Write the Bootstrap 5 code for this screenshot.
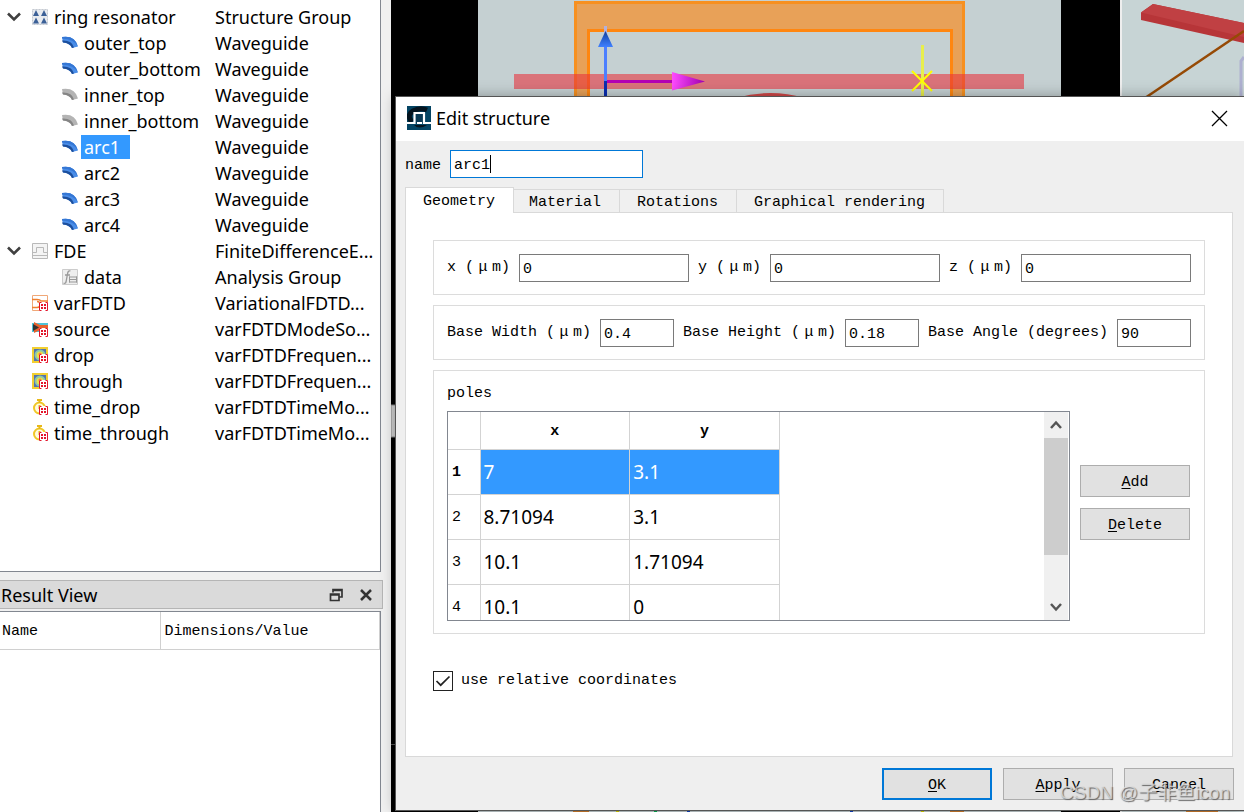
<!DOCTYPE html>
<html lang="en">
<head>
<meta charset="utf-8">
<meta name="viewport" content="width=device-width, initial-scale=1">
<title>Edit structure</title>
<link href="https://cdn.jsdelivr.net/npm/bootstrap@5.3.0/dist/css/bootstrap.min.css" rel="stylesheet">
<style>
  :root { --ui: "Noto Sans", "Noto Sans CJK SC", sans-serif; --mono: "Liberation Mono", "Noto Sans CJK SC", monospace; --line: #dcdcdc; --frame: #828790; --sel: #3399ff; }
  body { font-family: var(--ui); font-size: 18px; line-height: 26px; color: #000; background: #f0f0f0; }
  .mono { font-family: var(--mono); font-size: 15px; line-height: 18px; }
  svg { display: block; flex: none; }

  /* Object tree and result dock */
  .dock { width: 391px; flex: none; }
  .tree-pane { margin-right: 10px; padding-top: 4px; border: solid var(--frame); border-width: 0 1px 1px 0; }
  .tree-grid { width: 100%; table-layout: fixed; }
  .tree-grid td { height: 26px; padding: 0; white-space: nowrap; }
  .tree-grid td:first-child { width: 215px; }
  .node { height: 26px; padding-left: 32px; gap: 3px; }
  .node.child { padding-left: 62px; }
  .node.open { padding-left: 7px; }
  .node.open svg + svg { margin-left: 8px; }
  .node span { height: 24px; line-height: 24px; padding: 0 3px; }
  .picked span { background: var(--sel); color: #fff; padding-right: 10px; }
  .result-pane { flex: 0 0 232px; }
  .result-title { height: 29px; margin-right: 8px; padding: 0 9px 0 1px; background: #dadada; border: solid #b5b5b5; border-width: 1px 1px 1px 0; }
  .tool { border: 0; background: none; padding: 0; }
  .result-body { margin: 2px 10px 0 0; border: solid var(--frame); border-width: 1px 1px 0 0; }
  .result-body th { height: 37px; padding: 3px 0 0 4px; font-weight: 400; border: solid #d0d0d0; border-width: 0 1px 1px 0; }
  .result-body th:first-child { width: 160px; padding-left: 2px; }

  /* Viewports and dialog */
  .stage { background: #000; min-width: 0; }
  .stage > svg { position: absolute; inset: 0; width: 100%; height: 100%; }
  .sheet { position: absolute; inset: 97px 0 2px 5px; background: #efefef; box-shadow: 0 0 0 1px #555, 0 0 14px rgba(0,0,0,.35); }
  .sheet-title { height: 44px; padding: 0 16px 2px 11px; gap: 5px; }
  .field { height: 28px; min-width: 0; padding: 2px 3px 0; border: 1px solid #7a7a7a; border-radius: 0; background: #fff; color: #000; outline: 0; }
  .field:focus { border-color: #0078d7; }
  .name-row { padding: 9px 9px 0; gap: 9px; }
  .name-row label { padding-top: 3px; }
  .name-row .field { display: block; width: 193px; caret-color: transparent; }
  .caret { position: absolute; left: calc(4px + 4ch); top: 5px; width: 1px; height: 18px; background: #000; }
  .tab-strip { margin: 9px 11px 0 9px; height: 26px; }
  .tab-strip button { height: 24px; padding: 4px 18px 0 15px; border: 1px solid #d9d9d9; border-left: 0; background: #f0f0f0; color: #000; }
  .tab-strip .wide { padding: 4px 18px 0 17px; }
  .tab-strip .current { height: 26px; padding: 3px 18px 0 17px; border-left: 1px solid #d9d9d9; border-bottom: 0; background: #fff; z-index: 1; }
  .tab-panel { margin: -1px 11px 0 9px; padding: 27px 27px 0; border: 1px solid #d9d9d9; background: #fff; }
  .group { border: 1px solid var(--line); padding: 13px 13px 12px; margin-bottom: 10px; }
  .group.fields { gap: 9px; }
  .group.poles { padding-right: 14px; gap: 10px; }
  .caption { padding-top: 1px; margin-bottom: 8px; }
  .group label { white-space: nowrap; }
  .mu { display: inline-block; width: 18px; text-align: center; }
  .grid-frame { height: 210px; border: 1px solid var(--frame); overflow: hidden; }
  .poles-grid { width: 332px; table-layout: fixed; }
  .poles-grid th, .poles-grid td { height: 45px; padding: 0 3px; border: solid #d3d3d3; border-width: 0 1px 1px 0; }
  .poles-grid td { font-family: var(--ui); font-size: 19px; line-height: 26px; }
  .poles-grid th { padding: 3px 4px 0; }
  .poles-grid thead th { height: 37px; text-align: center; }
  .poles-grid th:first-child { width: 32px; }
  .poles-grid .hit td { background: var(--sel); color: #fff; }
  .scroller { width: 24px; margin-right: 1px; background: #f0f0f0; }
  .scroller button { height: 26px; }
  .thumb { height: 117px; background: #cdcdcd; }
  .side { gap: 11px; }
  .push { width: 110px; height: 32px; border: 1px solid #adadad; background: #e1e1e1; color: #000; padding: 3px 0 0; }
  .push.default { border: 2px solid #0078d7; }
  .push u { text-underline-offset: 2px; }
  .rel { margin-top: 37px; }
  .tick { appearance: none; width: 20px; height: 20px; margin: 0; border: 1px solid #222; background: #fff url("data:image/svg+xml,%3Csvg xmlns='http://www.w3.org/2000/svg' viewBox='0 0 18 18'%3E%3Cpath d='M2.500 9l4.200 4.200L15.500 4.500' fill='none' stroke='%23222' stroke-width='1.700'/%3E%3C/svg%3E"); }
  .actions { padding: 11px 10px 10px; gap: 11px; }
  .stamp { position: absolute; right: 14px; bottom: 5px; font-family: "Liberation Sans", "Noto Sans CJK SC", sans-serif; font-size: 19px; line-height: 28px; color: rgba(225,225,225,.75); text-shadow: 1px 1px 1px #666; pointer-events: none; white-space: nowrap; }
</style>
</head>
<body>
<svg width="0" height="0" class="position-absolute" aria-hidden="true">
  <defs>
    <symbol id="chev" viewBox="0 0 14 10"><path d="M1 1.500l6 6 6-6" fill="none" stroke="#404040" stroke-width="2.600"/></symbol>
    <symbol id="group" viewBox="0 0 16 16"><path d="M0 0h16v16H0z" fill="#e8ebef"/><path d="M.5.500h15v15H.5z" fill="none" stroke="#c5c9d0" stroke-dasharray="2 1"/><path d="M4 1l3 6H1zM12 1l3 6H9zM4 8.500l3 6H1zM12 8.500l3 6H9z" fill="#3c6097"/></symbol>
    <symbol id="guide" viewBox="0 0 16 16"><path d="M0 2Q13 0 16 11.500l-6 1.500Q8 8 1 7.500z" fill="#4a8de8"/><path d="M0 5.500Q10 5 12 12.500l-2 .5Q8 8 1 7.500z" fill="#1d4f9c"/><path d="M0 2Q13 0 16 11.500Q12 4 0 3.500z" fill="#3577d4"/></symbol>
    <symbol id="guide-off" viewBox="0 0 16 16"><path d="M0 2Q13 0 16 11.500l-6 1.500Q8 8 1 7.500z" fill="#b4b4b4"/><path d="M0 5.500Q10 5 12 12.500l-2 .5Q8 8 1 7.500z" fill="#858585"/></symbol>
    <symbol id="fde" viewBox="0 0 16 16"><path d="M.5.500h15v15H.5zM0 9.500h4.500v-5h7v5H16M0 12.500h16" fill="#f4f4f4" stroke="#b9b9b9"/></symbol>
    <symbol id="data" viewBox="0 0 16 16"><path d="M.5.500h15v15H.5z" fill="#eee" stroke="#ccc"/><path d="M8.500 2Q6 1 5.500 5L4 13Q3.500 15 1.500 14M3 6h5" fill="none" stroke="#999" stroke-width="1.300"/><path d="M7 8h8M7 10.500h8M7 13h8M7.500 7.500v6M14.500 7.500v6" stroke="#999"/></symbol>
    <symbol id="badge-red" viewBox="0 0 16 16"><path d="M7 7h9v9H7z" fill="#fff"/><path d="M9.500 7.500h-2v8h2M13.500 7.500h2v8h-2" fill="none" stroke="#e3142a"/><path d="M9 9h2v2H9zM12 9h2v2h-2zM9 12h2v2H9zM12 12h2v2h-2z" fill="#e3142a"/></symbol>
    <symbol id="var" viewBox="0 0 16 16"><path d="M.5.500h15v15H.5z" fill="#fff" stroke="#f0a878"/><path d="M0 4.500h5q3 0 4 1.500h7M0 12.500h5q3 0 3-3t-3-3" fill="none" stroke="#f08030" stroke-width="1.500"/><use href="#badge-red"/></symbol>
    <symbol id="src" viewBox="0 0 16 16"><path d="M0 2h16v9H0z" fill="#4fc3d8"/><path d="M2 1l6 3h8v5H8l-6 3z" fill="#e8622c"/><path d="M1 3l6 3.500L1 10z" fill="#333"/><use href="#badge-red"/></symbol>
    <symbol id="freq" viewBox="0 0 16 16"><path d="M1 1h14v14H1z" fill="#5373ad" stroke="#f2cf30" stroke-width="2"/><circle cx="8" cy="8" r="5.500" fill="#8cc7a8"/><circle cx="8" cy="8" r="3.500" fill="#e8e04c"/><circle cx="8" cy="7" r="1.500" fill="#ef8a3c"/><use href="#badge-red"/></symbol>
    <symbol id="time" viewBox="0 0 16 16"><circle cx="7.500" cy="9" r="5.500" fill="#fffbe0" stroke="#f0c828" stroke-width="2"/><path d="M5 1h5M7.500 1v3M7.500 6v4" stroke="#e8b818" stroke-width="2"/><use href="#badge-red"/></symbol>
  </defs>
</svg>

<div class="d-flex min-vh-100">
  <aside class="dock d-flex flex-column">
    <div class="tree-pane bg-white flex-grow-1">
      <table class="tree-grid">
        <tbody>
          <tr><td><div class="node open d-flex align-items-center"><svg width="14" height="10"><use href="#chev"/></svg><svg width="16" height="16"><use href="#group"/></svg><span>ring resonator</span></div></td><td>Structure Group</td></tr>
          <tr><td><div class="node child d-flex align-items-center"><svg width="16" height="16"><use href="#guide"/></svg><span>outer_top</span></div></td><td>Waveguide</td></tr>
          <tr><td><div class="node child d-flex align-items-center"><svg width="16" height="16"><use href="#guide"/></svg><span>outer_bottom</span></div></td><td>Waveguide</td></tr>
          <tr><td><div class="node child d-flex align-items-center"><svg width="16" height="16"><use href="#guide-off"/></svg><span>inner_top</span></div></td><td>Waveguide</td></tr>
          <tr><td><div class="node child d-flex align-items-center"><svg width="16" height="16"><use href="#guide-off"/></svg><span>inner_bottom</span></div></td><td>Waveguide</td></tr>
          <tr><td><div class="node child picked d-flex align-items-center"><svg width="16" height="16"><use href="#guide"/></svg><span>arc1</span></div></td><td>Waveguide</td></tr>
          <tr><td><div class="node child d-flex align-items-center"><svg width="16" height="16"><use href="#guide"/></svg><span>arc2</span></div></td><td>Waveguide</td></tr>
          <tr><td><div class="node child d-flex align-items-center"><svg width="16" height="16"><use href="#guide"/></svg><span>arc3</span></div></td><td>Waveguide</td></tr>
          <tr><td><div class="node child d-flex align-items-center"><svg width="16" height="16"><use href="#guide"/></svg><span>arc4</span></div></td><td>Waveguide</td></tr>
          <tr><td><div class="node open d-flex align-items-center"><svg width="14" height="10"><use href="#chev"/></svg><svg width="16" height="16"><use href="#fde"/></svg><span>FDE</span></div></td><td>FiniteDifferenceE...</td></tr>
          <tr><td><div class="node child d-flex align-items-center"><svg width="16" height="16"><use href="#data"/></svg><span>data</span></div></td><td>Analysis Group</td></tr>
          <tr><td><div class="node d-flex align-items-center"><svg width="16" height="16"><use href="#var"/></svg><span>varFDTD</span></div></td><td>VariationalFDTD...</td></tr>
          <tr><td><div class="node d-flex align-items-center"><svg width="16" height="16"><use href="#src"/></svg><span>source</span></div></td><td>varFDTDModeSo...</td></tr>
          <tr><td><div class="node d-flex align-items-center"><svg width="16" height="16"><use href="#freq"/></svg><span>drop</span></div></td><td>varFDTDFrequen...</td></tr>
          <tr><td><div class="node d-flex align-items-center"><svg width="16" height="16"><use href="#freq"/></svg><span>through</span></div></td><td>varFDTDFrequen...</td></tr>
          <tr><td><div class="node d-flex align-items-center"><svg width="16" height="16"><use href="#time"/></svg><span>time_drop</span></div></td><td>varFDTDTimeMo...</td></tr>
          <tr><td><div class="node d-flex align-items-center"><svg width="16" height="16"><use href="#time"/></svg><span>time_through</span></div></td><td>varFDTDTimeMo...</td></tr>
        </tbody>
      </table>
    </div>
    <section class="result-pane d-flex flex-column mt-2">
      <div class="result-title d-flex align-items-center">
        <span class="flex-grow-1">Result View</span>
        <button class="tool me-3" aria-label="Float"><svg width="14" height="14" viewBox="0 0 14 14"><path d="M4 4.500V1.500h9V9h-2.500M4 2.500h9M1.500 6h8.500v6.500H1.500zM1 7h9" fill="none" stroke="#333" stroke-width="1.700"/></svg></button>
        <button class="tool" aria-label="Close"><svg width="14" height="14" viewBox="0 0 14 14"><path d="M2 2l10 10M12 2L2 12" stroke="#333" stroke-width="2.500"/></svg></button>
      </div>
      <div class="result-body bg-white flex-grow-1">
        <table class="w-100 mono"><thead><tr><th>Name</th><th>Dimensions/Value</th></tr></thead></table>
      </div>
    </section>
  </aside>

  <main class="stage position-relative flex-grow-1">
    <svg viewBox="0 0 853 812" preserveAspectRatio="xMinYMin slice" aria-hidden="true">
      <defs>
        <linearGradient id="mg"><stop stop-color="#ff4cff"/><stop offset="1" stop-color="#a000b0"/></linearGradient>
        <linearGradient id="bl" x2="0" y2="1"><stop stop-color="#1040a0"/><stop offset="1" stop-color="#4080ff"/></linearGradient>
      </defs>
      <path d="M87 0h583v812H87z" fill="#c5d0d2"/>
      <path d="M184 100V3h388v97h-12V30H197v70z" fill="#e8a158"/>
      <path d="M184.500 100V2.500h388V100" fill="none" stroke="#f79020" stroke-width="3"/>
      <path d="M197.500 100V30.500h363V100" fill="none" stroke="#ff8610" stroke-width="3"/>
      <path d="M123 74h510v15H123z" fill="#e8303a" fill-opacity=".58"/>
      <path d="M345 98q35-10 68 0z" fill="#d04848"/>
      <path d="M214.500 26v8" stroke="#b5b0d8" stroke-width="3"/>
      <path d="M214.500 44v37" stroke="#4c7fff" stroke-width="3"/><path d="M214.500 81v20" stroke="#0a2eb0" stroke-width="3"/>
      <path d="M214.500 31l7.500 16h-15z" fill="url(#bl)"/>
      <path d="M216 81.500h66" stroke="#b400b4" stroke-width="3"/><path d="M281 72l33 9.500-33 9z" fill="url(#mg)"/>
      <path d="M531.500 45v55" stroke="#e8ee4c" stroke-width="3"/><path d="M521 71l20 20M541 71l-20 20" stroke="#ff0" stroke-width="2"/>
      <path d="M729 0h2v812h-2z" fill="#eee"/><path d="M731 0h122v812H731z" fill="#c7d4d5"/>
      <path d="M750 12.500L762 4l91 19v20L750 20z" fill="#b73538"/><path d="M750 12.500L762 4l91 19v14z" fill="#c04043"/>
      <path d="M754 98l99-67" stroke="#964a05" stroke-width="2.500"/>
      <path d="M853 57l-3 4v40" fill="none" stroke="#aeb0d0" stroke-width="3"/>
      <path d="M0 405h5v32H0z" fill="#d0d0d0" stroke="#888"/><path d="M0 744.500h5" stroke="#555"/>
      <path d="M182 809h16v3h-16zM559 809h14v3h-14zM795 809h32v3h-32z" fill="#cf7c2c"/>
      <path d="M225 809h3v3h-3zM530 809h3v3h-3z" fill="#d8d000"/><path d="M263 809h3v3h-3z" fill="#00b050"/><path d="M296 809h3v3h-3zM459 809h3v3h-3z" fill="#1040c0"/>
      <path d="M670 809h59v3h-59z" fill="#000"/>
    </svg>

    <div class="sheet d-flex flex-column" role="dialog" aria-labelledby="dlg-title">
      <header class="sheet-title bg-white d-flex align-items-center">
        <svg width="24" height="24" viewBox="0 0 24 24"><path d="M0 0h24v24H0z" fill="#044463"/><path d="M5 16Q-1 9 6 5T20 4" fill="none" stroke="#04141f" stroke-width="5"/><path d="M7 19q5 5 13 0z" fill="#04141f"/><path d="M7 7h11v10H7z" fill="#0a3a55"/><path d="M0 17h7.500V7H17v10h7M10 17h5" fill="none" stroke="#fff" stroke-width="2.200"/></svg>
        <span id="dlg-title" class="flex-grow-1">Edit structure</span>
        <button class="tool" aria-label="Close"><svg width="17" height="17" viewBox="0 0 17 17"><path d="M1 1l15 15M16 1L1 16" stroke="#000" stroke-width="1.300"/></svg></button>
      </header>

      <form class="mono d-flex flex-column flex-grow-1">
        <div class="name-row d-flex align-items-center">
          <label for="nm">name</label>
          <div class="position-relative"><input id="nm" class="field" value="arc1"><span class="caret"></span></div>
        </div>
        <div class="tab-strip d-flex align-items-end" role="tablist">
          <button type="button" class="current position-relative" role="tab" aria-selected="true">Geometry</button>
          <button type="button" role="tab">Material</button>
          <button type="button" class="wide" role="tab">Rotations</button>
          <button type="button" class="wide" role="tab">Graphical rendering</button>
        </div>
        <div class="tab-panel flex-grow-1">
          <div class="group fields d-flex align-items-center">
            <label for="px">x (<span class="mu">μ</span>m)</label><input id="px" class="field flex-fill w-25" value="0">
            <label for="py">y (<span class="mu">μ</span>m)</label><input id="py" class="field flex-fill w-25" value="0">
            <label for="pz">z (<span class="mu">μ</span>m)</label><input id="pz" class="field flex-fill w-25" value="0">
          </div>
          <div class="group fields d-flex align-items-center">
            <label for="bw">Base Width (<span class="mu">μ</span>m)</label><input id="bw" class="field flex-fill w-25" value="0.4">
            <label for="bh">Base Height (<span class="mu">μ</span>m)</label><input id="bh" class="field flex-fill w-25" value="0.18">
            <label for="ba">Base Angle (degrees)</label><input id="ba" class="field flex-fill w-25" value="90">
          </div>
          <div class="group poles d-flex">
            <div class="flex-grow-1">
              <div class="caption">poles</div>
              <div class="grid-frame d-flex justify-content-between align-items-start">
                <table class="poles-grid">
                  <thead><tr><th></th><th>x</th><th>y</th></tr></thead>
                  <tbody>
                    <tr class="hit"><th>1</th><td>7</td><td>3.1</td></tr>
                    <tr><th class="fw-normal">2</th><td>8.71094</td><td>3.1</td></tr>
                    <tr><th class="fw-normal">3</th><td>10.1</td><td>1.71094</td></tr>
                    <tr><th class="fw-normal">4</th><td>10.1</td><td>0</td></tr>
                  </tbody>
                </table>
                <div class="scroller h-100 d-flex flex-column">
                  <button type="button" class="tool d-flex align-items-center justify-content-center" aria-label="Scroll up"><svg width="12" height="10" viewBox="0 0 12 10"><path d="M1 8l5-5.500L11 8" fill="none" stroke="#555" stroke-width="2.500"/></svg></button>
                  <div class="thumb"></div>
                  <button type="button" class="tool mt-auto d-flex align-items-center justify-content-center" aria-label="Scroll down"><svg width="12" height="10" viewBox="0 0 12 10"><path d="M1 2l5 5.500L11 2" fill="none" stroke="#555" stroke-width="2.500"/></svg></button>
                </div>
              </div>
            </div>
            <div class="side d-flex flex-column justify-content-center">
              <button type="button" class="push"><u>A</u>dd</button>
              <button type="button" class="push"><u>D</u>elete</button>
            </div>
          </div>
          <div class="rel d-flex align-items-center gap-2">
            <input id="rel" type="checkbox" class="tick" checked><label for="rel">use relative coordinates</label>
          </div>
        </div>
        <div class="actions d-flex justify-content-end">
          <button type="button" class="push default"><u>O</u>K</button>
          <button type="button" class="push"><u>A</u>pply</button>
          <button type="button" class="push"><u>C</u>ancel</button>
        </div>
      </form>
    </div>
    <div class="stamp">CSDN @子非鱼icon</div>
  </main>
</div>
<script src="https://cdn.jsdelivr.net/npm/bootstrap@5.3.0/dist/js/bootstrap.bundle.min.js"></script>
<script>
  const nameField = document.getElementById('nm');
  nameField.focus();
  nameField.setSelectionRange(4, 4);
</script>
</body>
</html>
